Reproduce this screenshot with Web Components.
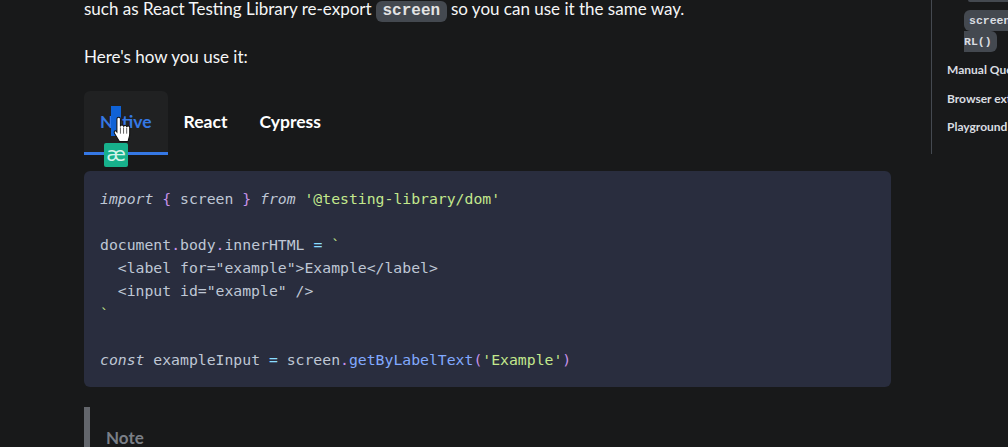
<!DOCTYPE html>
<html>
<head>
<meta charset="utf-8">
<title>Docs</title>
<style>
html, body { margin: 0; height: 100%; background: #18191a; overflow: hidden; }
</style>
</head>
<body>
<doc-page>
  <doc-article>
    <doc-para class="first">such as React Testing Library re-export <code-chip>screen</code-chip> so you can use it the same way.</doc-para>
    <doc-para>Here's how you use it:</doc-para>
    <tab-bar>
      <tab-item active>Native</tab-item>
      <tab-item>React</tab-item>
      <tab-item>Cypress</tab-item>
    </tab-bar>
    <code-block></code-block>
    <note-box>Note</note-box>
  </doc-article>
  <toc-nav></toc-nav>
</doc-page>
<cursor-overlay></cursor-overlay>

<script>
const pageTemplate = document.createElement("template");
pageTemplate.innerHTML = `
<style>
:host { display: flex; height: 447px; overflow: hidden; font-family: "Lato", "Noto Sans", sans-serif; color: #f5f6f7; }
</style>
<slot></slot>
`;

class DocPage extends HTMLElement {
  constructor() {
    super();
    this.attachShadow({ mode: "open" });
    this.shadowRoot.appendChild(pageTemplate.content.cloneNode(true));
  }
}

const articleTemplate = document.createElement("template");
articleTemplate.innerHTML = `
<style>
:host { display: block; flex: 0 0 807px; margin-left: 84px; margin-right: 40px; margin-top: -4px; }
</style>
<slot></slot>
`;

class DocArticle extends HTMLElement {
  constructor() {
    super();
    this.attachShadow({ mode: "open" });
    this.shadowRoot.appendChild(articleTemplate.content.cloneNode(true));
  }
}

const paraTemplate = document.createElement("template");
paraTemplate.innerHTML = `
<style>
:host { display: block; font-size: 17px; line-height: 25px; margin-bottom: 22px; white-space: nowrap; }
</style>
<slot></slot>
`;

class DocPara extends HTMLElement {
  constructor() {
    super();
    this.attachShadow({ mode: "open" });
    this.shadowRoot.appendChild(paraTemplate.content.cloneNode(true));
  }
}

const chipTemplate = document.createElement("template");
chipTemplate.innerHTML = `
<style>
:host {
  display: inline-block;
  font-family: "Liberation Mono", monospace;
  font-size: 16px;
  font-weight: 700;
  line-height: 21px;
  padding: 0 6.5px;
  color: #e3e3e3;
  background: #444950;
  border-radius: 6px;
}
</style>
<slot></slot>
`;

class CodeChip extends HTMLElement {
  constructor() {
    super();
    this.attachShadow({ mode: "open" });
    this.shadowRoot.appendChild(chipTemplate.content.cloneNode(true));
  }
}

const tabBarTemplate = document.createElement("template");
tabBarTemplate.innerHTML = `
<style>
:host { display: flex; margin-bottom: 16px; }
</style>
<slot></slot>
`;

class TabBar extends HTMLElement {
  constructor() {
    super();
    this.attachShadow({ mode: "open" });
    this.shadowRoot.appendChild(tabBarTemplate.content.cloneNode(true));
  }
}

const tabTemplate = document.createElement("template");
tabTemplate.innerHTML = `
<style>
:host {
  display: block;
  padding: 19px 16px;
  font-size: 17.5px;
  font-weight: 700;
  line-height: 23px;
  color: #fff;
  border-bottom: 3px solid transparent;
  border-radius: 6px 6px 0 0;
}
:host([active]) { color: #3578e5; background: #202122; border-bottom-color: #3578e5; }
</style>
<slot></slot>
`;

class TabItem extends HTMLElement {
  constructor() {
    super();
    this.attachShadow({ mode: "open" });
    this.shadowRoot.appendChild(tabTemplate.content.cloneNode(true));
  }
}

const codeTemplate = document.createElement("template");
codeTemplate.innerHTML = `
<style>
:host {
  display: block;
  background: #292d3e;
  color: #bfc7d5;
  border-radius: 6px;
  padding: 16px;
  margin-bottom: 20px;
}
pre {
  margin: 0;
  font-family: "DejaVu Sans Mono", monospace;
  font-size: 14.78px;
  line-height: 23px;
}
i { font-style: italic; }
.p { color: #c792ea; }
.s { color: #c3e88d; }
.o { color: #89ddff; }
.f { color: #82aaff; }
</style>
<pre><i>import</i> <span class="p">{</span> screen <span class="p">}</span> <i>from</i> <span class="s">'@testing-library/dom'</span>

document<span class="p">.</span>body<span class="p">.</span>innerHTML <span class="o">=</span> <span class="s">\`</span>
  &lt;label for="example"&gt;Example&lt;/label&gt;
  &lt;input id="example" /&gt;
<span class="s">\`</span>

<i>const</i> exampleInput <span class="o">=</span> screen<span class="p">.</span><span class="f">getByLabelText</span><span class="p">(</span><span class="s">'Example'</span><span class="p">)</span></pre>
`;

class CodeBlock extends HTMLElement {
  constructor() {
    super();
    this.attachShadow({ mode: "open" });
    this.shadowRoot.appendChild(codeTemplate.content.cloneNode(true));
  }
}

const noteTemplate = document.createElement("template");
noteTemplate.innerHTML = `
<style>
:host {
  display: block;
  border-left: 6px solid #63666c;
  padding: 20px 16px;
  font-size: 17px;
  font-weight: 700;
  line-height: 22px;
  color: #7a7f87;
}
</style>
<slot></slot>
`;

class NoteBox extends HTMLElement {
  constructor() {
    super();
    this.attachShadow({ mode: "open" });
    this.shadowRoot.appendChild(noteTemplate.content.cloneNode(true));
  }
}

const tocTemplate = document.createElement("template");
tocTemplate.innerHTML = `
<style>
:host {
  display: block;
  flex: 0 0 260px;
  align-self: flex-start;
  height: 154px;
  box-sizing: border-box;
  border-left: 1px solid #444950;
  padding-left: 15px;
  font-size: 12px;
  font-weight: 700;
  color: #dadde1;
  overflow: hidden;
}
.clip { height: 2px; margin: 0 0 8px 21px; width: 60px; background: #444950; border-radius: 0 0 6px 6px; }
.nested { width: 205px; margin-left: 17px; line-height: 20px; height: 46px; }
code {
  font-family: "Liberation Mono", monospace;
  font-size: 11.5px;
  word-break: break-all;
  background: #444950;
  color: #dadde1;
  border-radius: 6px;
  padding: 4px 5px;
}
ul { list-style: none; margin: 0; padding: 0; }
li { height: 28.5px; line-height: 28.5px; white-space: nowrap; }
</style>
<div class="clip"></div>
<div class="nested"><code>screen.logTestingPlaygroundURL()</code></div>
<ul>
  <li>Manual Queries</li>
  <li>Browser extension</li>
  <li>Playground</li>
</ul>
`;

class TocNav extends HTMLElement {
  constructor() {
    super();
    this.attachShadow({ mode: "open" });
    this.shadowRoot.appendChild(tocTemplate.content.cloneNode(true));
  }
}

const cursorTemplate = document.createElement("template");
cursorTemplate.innerHTML = `
<style>
:host { position: absolute; left: 0; top: 0; width: 0; height: 0; }
.sel { position: absolute; left: 111px; top: 106px; width: 10px; height: 30px; background: #0f62d6; }
.badge {
  position: absolute; left: 104px; top: 143px; width: 24px; height: 24px;
  background: #17b18c; border-radius: 2px; color: #d4f3ea;
  font: 20px/22px "DejaVu Sans", sans-serif; text-align: center;
}
svg { position: absolute; left: 113px; top: 116px; }
</style>
<div class="sel"></div>
<div class="badge">æ</div>
<svg width="18" height="26" viewBox="0 0 17 25">
  <path d="M3.600 3a1.700 1.700 0 0 1 3.400 0V10a1.500 1.500 0 0 1 3 .3a1.500 1.500 0 0 1 3 .5a1.400 1.400 0 0 1 2.900.7V17c0 2.800-1 4.500-1.500 7.500H6L1.500 17c-1-1.500-.5-3 1-2.800L3.600 15.500z" fill="#fff" stroke="#111" stroke-width="1"/>
  <path d="M7 11v6M10 11v6M13 11.500v5.500" stroke="#444" stroke-width=".8" fill="none"/>
</svg>
`;

class CursorOverlay extends HTMLElement {
  constructor() {
    super();
    this.attachShadow({ mode: "open" });
    this.shadowRoot.appendChild(cursorTemplate.content.cloneNode(true));
  }
}

customElements.define("doc-page", DocPage);
customElements.define("doc-article", DocArticle);
customElements.define("doc-para", DocPara);
customElements.define("code-chip", CodeChip);
customElements.define("tab-bar", TabBar);
customElements.define("tab-item", TabItem);
customElements.define("code-block", CodeBlock);
customElements.define("note-box", NoteBox);
customElements.define("toc-nav", TocNav);
customElements.define("cursor-overlay", CursorOverlay);
</script>
</body>
</html>
